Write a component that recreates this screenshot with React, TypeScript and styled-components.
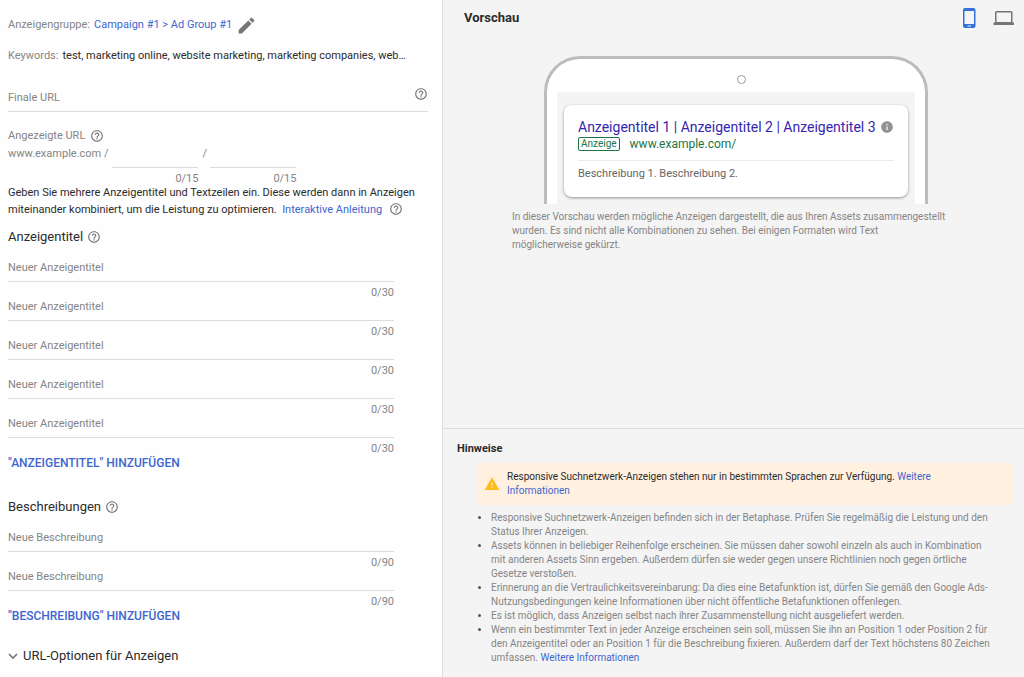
import React from "react";
import styled, { createGlobalStyle } from "styled-components";
import { MdEdit, MdHelpOutline, MdInfo, MdWarning } from "react-icons/md";

const color = {
  text: "#2b2b2b",
  muted: "#858585",
  link: "#3f66cf",
  line: "#dcdcdc",
  panel: "#f4f4f4",
  icon: "#757575",
  green: "#1c7545",
  title: "#3526b0",
};

const GlobalStyle = createGlobalStyle`
  *, *::before, *::after { box-sizing: border-box; }
  body {
    margin: 0;
    background: #fefefe;
    color: ${color.text};
    font: 11px/14px Roboto, "Liberation Sans", sans-serif;
  }
  button, input { font: inherit; color: inherit; margin: 0; padding: 0; border: 0; background: none; }
  button { cursor: pointer; }
  h1, h2, h3, p, ul { margin: 0; padding: 0; }
  svg { display: block; flex: none; }
`;

const Page = styled.div`
  display: grid;
  grid-template-columns: minmax(0, 442fr) minmax(0, 582fr);
  min-height: 100vh;
`;

const Form = styled.form`
  padding: 17px 14px 12px 8px;
`;

const Line = styled.p`
  display: flex;
  align-items: center;
  gap: 4px;
  height: 16px;
  margin-bottom: 15px;
  line-height: 16px;
  white-space: nowrap;
  color: ${color.muted};
`;

const Keywords = styled.span`
  color: ${color.text};
`;

const Link = styled.a`
  color: ${color.link};
  text-decoration: none;
`;

const IconButton = styled.button<{ $tone?: string }>`
  display: inline-flex;
  align-items: center;
  justify-content: center;
  flex: none;
  color: ${(p) => p.$tone ?? color.icon};
`;

const TextInput = styled.input`
  display: block;
  flex: 1;
  width: 100%;
  min-width: 0;
  height: 21px;
  padding-bottom: 7px;
  line-height: 14px;
  outline: none;
  &::placeholder { color: ${color.muted}; opacity: 1; }
`;

const UrlField = styled.div`
  display: flex;
  align-items: flex-start;
  margin-top: 23px;
  border-bottom: 1px solid ${color.line};
  ${TextInput} {
    height: 24px;
    padding-top: 3px;
  }
`;

const PathLabel = styled.div`
  display: flex;
  align-items: center;
  gap: 5px;
  height: 16px;
  margin: 16px 0 2px;
  color: ${color.muted};
`;

const PathRow = styled.div`
  display: flex;
  height: 38px;
  gap: 4px;
  line-height: 16px;
  color: ${color.muted};
`;

const Slash = styled.span`
  width: 4px;
  text-align: center;
`;

const PathField = styled.div`
  width: 86px;
`;

const Underline = styled.div`
  border-bottom: 1px solid ${color.line};
`;

const Counter = styled.div`
  padding-top: 5px;
  text-align: right;
  line-height: 12px;
  color: ${color.muted};
`;

const Intro = styled.p`
  line-height: 17px;
`;

const InlineHelp = styled.span`
  display: inline-flex;
  margin-left: 7px;
  vertical-align: -3px;
`;

const Heading = styled.h2<{ $gap: number }>`
  display: flex;
  align-items: center;
  gap: 4px;
  height: 18px;
  margin: ${(p) => p.$gap}px 0 14px;
  font-size: 13px;
  font-weight: 400;
  line-height: 18px;
`;

const Fields = styled.div`
  margin-right: 34px;
`;

const AddButton = styled.button`
  display: block;
  height: 16px;
  color: ${color.link};
  font-size: 12px;
  font-weight: 500;
  line-height: 16px;
`;

const Expander = styled.button`
  display: flex;
  align-items: center;
  gap: 5px;
  height: 18px;
  margin-top: 23px;
  font-size: 13px;
  line-height: 18px;
`;

const Side = styled.aside`
  display: flex;
  flex-direction: column;
  border-left: 1px solid ${color.line};
  background: ${color.panel};
`;

const Preview = styled.section`
  height: 429px;
  border-bottom: 1px solid ${color.line};
`;

const PreviewHeader = styled.header`
  display: flex;
  align-items: center;
  height: 36px;
  padding: 0 10px 0 21px;
`;

const PreviewTitle = styled.h2`
  flex: 1;
  font-size: 13px;
  font-weight: 700;
`;

const Devices = styled.div`
  display: flex;
  align-items: center;
  gap: 14px;
`;

const Mockup = styled.div`
  padding: 20px 0 0 5px;
`;

const Phone = styled.div`
  width: 384px;
  max-width: 100%;
  height: 148px;
  margin: 0 auto;
  padding: 0 10px;
  border: 3px solid #bcbcbc;
  border-bottom: 0;
  border-radius: 36px 36px 0 0;
  background: #fff;
`;

const Speaker = styled.div`
  display: flex;
  align-items: center;
  justify-content: center;
  height: 33px;
  padding: 7px 0 0 10px;
  &::before {
    content: "";
    width: 9px;
    height: 9px;
    border: 1px solid #999;
    border-radius: 50%;
  }
`;

const Screen = styled.div`
  height: 112px;
  padding: 13px 7px 0;
  background: ${color.panel};
`;

const AdCard = styled.article`
  height: 92px;
  padding: 13px 14px;
  border-radius: 8px;
  background: #fff;
  box-shadow: 0 1px 3px rgba(0, 0, 0, 0.4);
`;

const AdTitleRow = styled.div`
  display: flex;
  align-items: center;
  justify-content: space-between;
  height: 18px;
  white-space: nowrap;
`;

const AdTitle = styled.h3`
  color: ${color.title};
  font-size: 14px;
  font-weight: 400;
  line-height: 18px;
`;

const AdUrl = styled.div`
  display: flex;
  align-items: center;
  gap: 10px;
  height: 16px;
  color: ${color.green};
  font-size: 12px;
`;

const Badge = styled.span`
  padding: 0 2px;
  border: 1px solid ${color.green};
  border-radius: 2px;
  font-size: 10px;
  line-height: 12px;
`;

const AdText = styled.p`
  margin-top: 8px;
  padding-top: 6px;
  border-top: 1px solid #ebebeb;
  color: #666;
`;

const Caption = styled.p`
  width: 448px;
  max-width: 100%;
  margin: 6px auto 0;
  padding-right: 12px;
  color: ${color.muted};
  font-size: 10px;
`;

const Notes = styled.section`
  padding: 13px 10px 12px 14px;
  font-size: 10px;
`;

const NotesTitle = styled.h2`
  font-size: 11px;
  font-weight: 700;
`;

const Alert = styled.div`
  display: flex;
  align-items: center;
  gap: 7px;
  margin: 7px 0 0 20px;
  padding: 7px 60px 7px 7px;
  border-radius: 5px;
  background: #fff0df;
`;

const List = styled.ul`
  margin-top: 6px;
  padding-left: 34px;
  color: ${color.muted};
  li::marker {
    color: #555;
  }
`;

function Help({ label }: { label: string }) {
  return (
    <IconButton type="button" aria-label={label}>
      <MdHelpOutline size={14} />
    </IconButton>
  );
}

function CountedField({ label, max }: { label: string; max: number }) {
  return (
    <div>
      <Underline>
        <TextInput aria-label={label} placeholder={label} maxLength={max} />
      </Underline>
      <Counter>0/{max}</Counter>
    </div>
  );
}

function PathInput({ label }: { label: string }) {
  return (
    <PathField>
      <Underline>
        <TextInput aria-label={label} maxLength={15} />
      </Underline>
      <Counter>0/15</Counter>
    </PathField>
  );
}

export default function App() {
  return (
    <>
      <GlobalStyle />
      <Page>
        <Form>
          <Line>
            Anzeigengruppe: <Link href="#gruppe">Campaign #1 &gt; Ad Group #1</Link>
            <IconButton type="button" aria-label="Anzeigengruppe bearbeiten">
              <MdEdit size={21} />
            </IconButton>
          </Line>
          <Line>
            Keywords:
            <Keywords>test, marketing online, website marketing, marketing companies, web…</Keywords>
          </Line>
          <UrlField>
            <TextInput aria-label="Finale URL" placeholder="Finale URL" />
            <Help label="Hilfe zur finalen URL" />
          </UrlField>
          <PathLabel>
            Angezeigte URL <Help label="Hilfe zur angezeigten URL" />
          </PathLabel>
          <PathRow>
            <span>www.example.com /</span>
            <PathInput label="Pfad 1" />
            <Slash>/</Slash>
            <PathInput label="Pfad 2" />
          </PathRow>
          <Intro>
            Geben Sie mehrere Anzeigentitel und Textzeilen ein. Diese werden dann in Anzeigen miteinander kombiniert, um
            die Leistung zu optimieren.&nbsp; <Link href="#anleitung">Interaktive Anleitung</Link>
            <InlineHelp>
              <Help label="Hilfe zur Anleitung" />
            </InlineHelp>
          </Intro>
          <Heading $gap={10}>
            Anzeigentitel <Help label="Hilfe zum Anzeigentitel" />
          </Heading>
          <Fields>
            {[1, 2, 3, 4, 5].map((n) => (
              <CountedField key={n} label="Neuer Anzeigentitel" max={30} />
            ))}
          </Fields>
          <AddButton type="button">"ANZEIGENTITEL" HINZUFÜGEN</AddButton>
          <Heading $gap={27}>
            Beschreibungen <Help label="Hilfe zu Beschreibungen" />
          </Heading>
          <Fields>
            {[1, 2].map((n) => (
              <CountedField key={n} label="Neue Beschreibung" max={90} />
            ))}
          </Fields>
          <AddButton type="button">"BESCHREIBUNG" HINZUFÜGEN</AddButton>
          <Expander type="button">
            <svg width="10" height="8" viewBox="0 0 10 8">
              <path d="M1 2l4 4 4-4" fill="none" stroke={color.icon} strokeWidth="1.6" />
            </svg>
            URL-Optionen für Anzeigen
          </Expander>
        </Form>
        <Side>
          <Preview>
            <PreviewHeader>
              <PreviewTitle>Vorschau</PreviewTitle>
              <Devices>
                <IconButton type="button" aria-label="Mobil" $tone="#3272d9">
                  <svg width="14" height="20" viewBox="0 0 14 20">
                    <path
                      fill="currentColor"
                      fillRule="evenodd"
                      d="M3 0h8.500a2 2 0 0 1 2 2v16a2 2 0 0 1-2 2H3a2 2 0 0 1-2-2V2a2 2 0 0 1 2-2zM2.500 3v13h9.500V3zM5.500 17.500v1h3.500v-1z"
                    />
                  </svg>
                </IconButton>
                <IconButton type="button" aria-label="Computer">
                  <svg width="24" height="16" viewBox="0 0 24 16">
                    <path
                      fill="currentColor"
                      fillRule="evenodd"
                      d="M6.500 1H21A1.500 1.500 0 0 1 22.500 2.500V12.500h1.500V15H3.500v-2.500H5v-10A1.500 1.500 0 0 1 6.500 1zM6.500 2.500v9.500h14.500V2.500z"
                    />
                  </svg>
                </IconButton>
              </Devices>
            </PreviewHeader>
            <Mockup>
              <Phone>
                <Speaker />
                <Screen>
                  <AdCard>
                    <AdTitleRow>
                      <AdTitle>Anzeigentitel 1 | Anzeigentitel 2 | Anzeigentitel 3</AdTitle>
                      <MdInfo size={14} color="#929292" />
                    </AdTitleRow>
                    <AdUrl>
                      <Badge>Anzeige</Badge>
                      www.example.com/
                    </AdUrl>
                    <AdText>Beschreibung 1. Beschreibung 2.</AdText>
                  </AdCard>
                </Screen>
              </Phone>
              <Caption>
                In dieser Vorschau werden mögliche Anzeigen dargestellt, die aus Ihren Assets zusammengestellt wurden.
                Es sind nicht alle Kombinationen zu sehen. Bei einigen Formaten wird Text möglicherweise gekürzt.
              </Caption>
            </Mockup>
          </Preview>
          <Notes>
            <NotesTitle>Hinweise</NotesTitle>
            <Alert>
              <MdWarning size={16} color="#fdbc1c" />
              <p>
                Responsive Suchnetzwerk-Anzeigen stehen nur in bestimmten Sprachen zur Verfügung.{" "}
                <Link href="#sprachen">Weitere Informationen</Link>
              </p>
            </Alert>
            <List>
              <li>
                Responsive Suchnetzwerk-Anzeigen befinden sich in der Betaphase. Prüfen Sie regelmäßig die Leistung und
                den
                <br />
                Status Ihrer Anzeigen.
              </li>
              <li>
                Assets können in beliebiger Reihenfolge erscheinen. Sie müssen daher sowohl einzeln als auch in
                Kombination
                <br />
                mit anderen Assets Sinn ergeben. Außerdem dürfen sie weder gegen unsere Richtlinien noch gegen örtliche
                <br />
                Gesetze verstoßen.
              </li>
              <li>
                Erinnerung an die Vertraulichkeitsvereinbarung: Da dies eine Betafunktion ist, dürfen Sie gemäß den
                Google Ads-Nutzungsbedingungen keine Informationen über nicht öffentliche Betafunktionen offenlegen.
              </li>
              <li>Es ist möglich, dass Anzeigen selbst nach ihrer Zusammenstellung nicht ausgeliefert werden.</li>
              <li>
                Wenn ein bestimmter Text in jeder Anzeige erscheinen sein soll, müssen Sie ihn an Position 1 oder
                Position 2 für
                <br />
                den Anzeigentitel oder an Position 1 für die Beschreibung fixieren. Außerdem darf der Text höchstens 80
                Zeichen
                <br />
                umfassen. <Link href="#hinweise">Weitere Informationen</Link>
              </li>
            </List>
          </Notes>
        </Side>
      </Page>
    </>
  );
}
